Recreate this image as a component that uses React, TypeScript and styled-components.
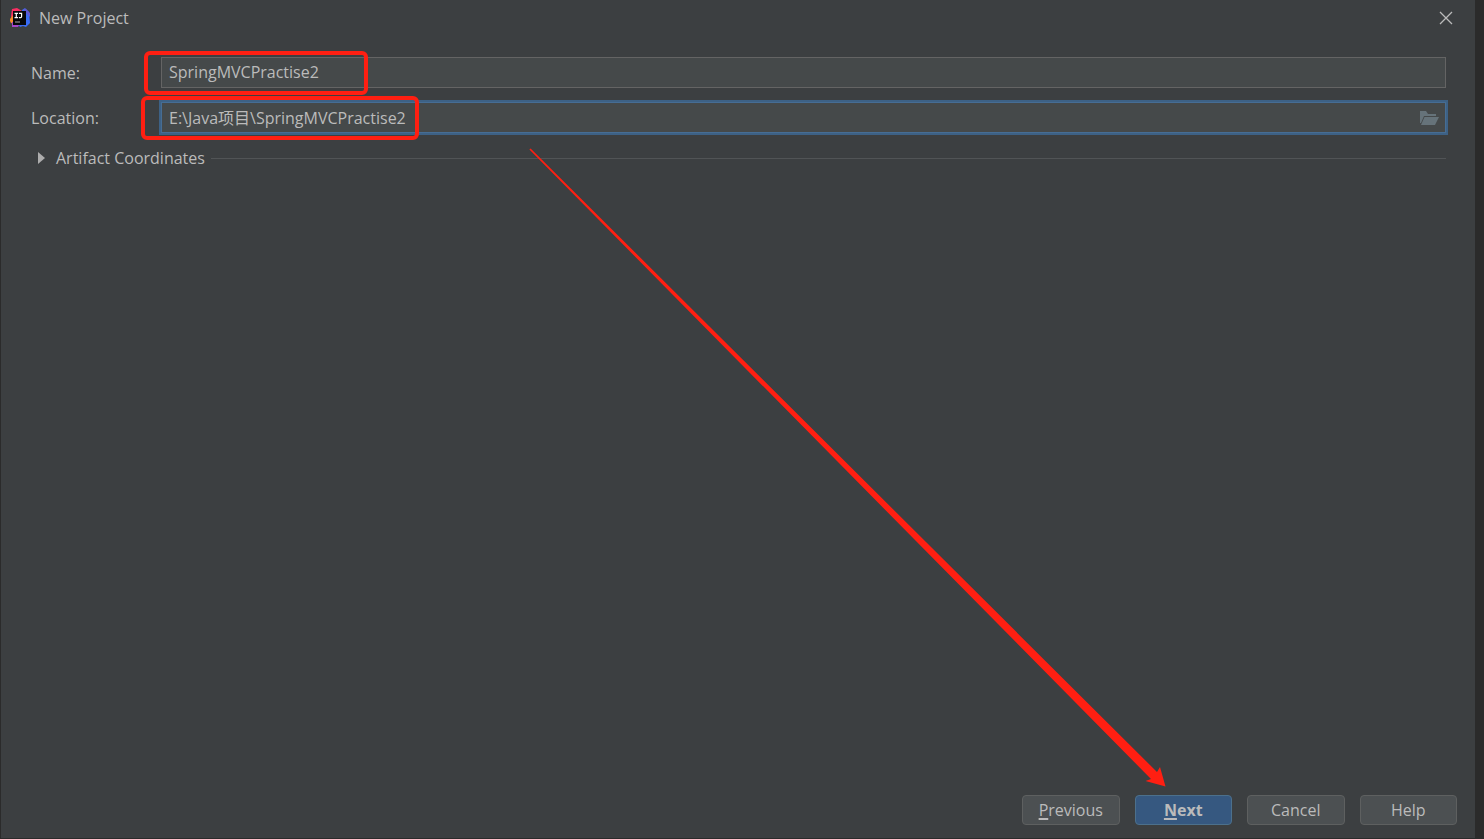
import React, { useState } from "react";
import styled, { createGlobalStyle } from "styled-components";

const GlobalStyle = createGlobalStyle`
  * { box-sizing: border-box; }
  body {
    margin: 0;
    background: #2b2b2b;
    color: #bbbbbb;
    font: 16px/22px "Open Sans", "Noto Sans CJK SC", sans-serif;
  }
  input, button { font: inherit; color: inherit; }
`;

const Screen = styled.div`
  position: relative;
  display: flex;
  min-height: 100vh;
  padding: 0 9px 1px 1px;
  overflow: hidden;
`;

const Dialog = styled.main`
  flex: 1;
  display: flex;
  flex-direction: column;
  background: #3c3f41;
`;

const TitleBar = styled.header`
  display: flex;
  align-items: center;
  gap: 8px;
  height: 36px;
  padding: 0 22px 0 8px;
`;

const Title = styled.h1`
  flex: 1;
  margin: 0;
  font-size: 16px;
  font-weight: 400;
`;

const CloseButton = styled.button`
  display: flex;
  padding: 0;
  border: 0;
  background: none;
`;

const Form = styled.form`
  flex: 1;
  display: flex;
  flex-direction: column;
  padding: 21px 29px 0 30px;
`;

const Row = styled.div`
  display: flex;
  align-items: center;
  margin-bottom: 14px;
`;

const Label = styled.label`
  width: 130px;
`;

const Field = styled.div`
  position: relative;
  flex: 1;
  display: flex;
`;

const TextInput = styled.input<{ $active?: boolean }>`
  flex: 1;
  min-width: 0;
  height: 31px;
  padding: 0 36px 2px 7px;
  outline: none;
  border: 1px solid ${(p) => (p.$active ? "#466d94" : "#646464")};
  background: #45494a;
  box-shadow: ${(p) => (p.$active ? "0 0 0 2px #3d6185" : "none")};
`;

const BrowseButton = styled.button`
  position: absolute;
  right: 7px;
  top: 8px;
  display: flex;
  padding: 0;
  border: 0;
  background: none;
`;

const Highlight = styled.span<{ $left: number; $width: number }>`
  position: absolute;
  top: -6px;
  left: ${(p) => p.$left}px;
  width: ${(p) => p.$width}px;
  height: 44px;
  border: 4px solid #ff1f12;
  border-radius: 6px;
  pointer-events: none;
`;

const Section = styled.button`
  display: flex;
  align-items: center;
  padding: 0 0 0 7px;
  border: 0;
  background: none;
  text-align: left;
`;

const SectionTitle = styled.span`
  margin: 0 6px 0 11px;
`;

const Rule = styled.span`
  flex: 1;
  height: 1px;
  background: #515456;
`;

const Footer = styled.footer`
  display: flex;
  justify-content: flex-end;
  padding: 0 18px 13px;
`;

const Actions = styled.div`
  display: grid;
  grid-template-columns: repeat(4, 1fr);
  gap: 15px;
  width: 435px;
`;

const ActionButton = styled.button<{ $primary?: boolean }>`
  height: 30px;
  padding: 0;
  font-weight: ${(p) => (p.$primary ? 700 : 400)};
  border: 1px solid ${(p) => (p.$primary ? "#4c708c" : "#5e6060")};
  border-radius: 4px;
  background: ${(p) => (p.$primary ? "#365880" : "#4c5052")};
`;

const Mnemonic = styled.span`
  text-decoration: underline;
  text-decoration-thickness: 2px;
  text-underline-offset: 2px;
`;

const ArrowLayer = styled.svg`
  position: absolute;
  left: 0;
  top: 0;
  pointer-events: none;
`;

const IdeaLogo = () => (
  <svg width="22" height="20" viewBox="0 0 22 20" aria-hidden="true">
    <path d="M3 1 8 0l5 3-2 12-8-2-1-5z" fill="#fc2e63" />
    <path d="M1 11l3-4 1 9-3-1-1-2z" fill="#f98b29" />
    <path d="M3 14h9l-3 5H3z" fill="#a545c8" />
    <path d="M13 2l3-2 4 4 1 11-4 4-3-1-3 1-2-3z" fill="#3a6cf2" />
    <path d="M14 1l3 0 4 4 0 4-4-4z" fill="#6257ce" />
    <rect x="4" y="3" width="13" height="14" fill="#08080a" />
    <path d="M5.5 5.4h3.6M7.3 5v5M5.5 9.7h3.6M10 5.4h2.6v3.2q0 1.1-1 1.1H10" fill="none" stroke="#fff" strokeWidth="1.2" />
    <path d="M6 14h5" stroke="#aaa" strokeWidth="1" />
  </svg>
);

const CloseIcon = () => (
  <svg width="14" height="14" viewBox="0 0 14 14" fill="none" stroke="#bbbbbb" strokeWidth="1.3">
    <path d="M1 1l12 12M13 1L1 13" />
  </svg>
);

const FolderIcon = () => (
  <svg width="19" height="16" viewBox="0 0 19 16" fill="#66737a">
    <path d="M0 13V1h6l2 3h8v2H4L1 13z" />
    <path d="M4.5 7H19l-4 8H1z" />
  </svg>
);

const Chevron = () => (
  <svg width="7" height="12" viewBox="0 0 7 12" fill="#adadad">
    <path d="M0 0l7 6-7 6z" />
  </svg>
);

export default function App() {
  const [name, setName] = useState("SpringMVCPractise2");
  const [location, setLocation] = useState("E:\\Java项目\\SpringMVCPractise2");

  return (
    <Screen>
      <GlobalStyle />
      <Dialog>
        <TitleBar>
          <IdeaLogo />
          <Title>New Project</Title>
          <CloseButton type="button" aria-label="Close">
            <CloseIcon />
          </CloseButton>
        </TitleBar>
        <Form>
          <Row>
            <Label htmlFor="name">Name:</Label>
            <Field>
              <TextInput id="name" value={name} onChange={(e) => setName(e.target.value)} />
              <Highlight $left={-17} $width={224} />
            </Field>
          </Row>
          <Row>
            <Label htmlFor="location">Location:</Label>
            <Field>
              <TextInput
                $active
                id="location"
                value={location}
                onChange={(e) => setLocation(e.target.value)}
              />
              <BrowseButton type="button" aria-label="Browse">
                <FolderIcon />
              </BrowseButton>
              <Highlight $left={-20} $width={278} />
            </Field>
          </Row>
          <Section type="button" aria-expanded="false">
            <Chevron />
            <SectionTitle>Artifact Coordinates</SectionTitle>
            <Rule />
          </Section>
        </Form>
        <Footer>
          <Actions>
            <ActionButton type="button">
              <Mnemonic>P</Mnemonic>revious
            </ActionButton>
            <ActionButton type="button" $primary>
              <Mnemonic>N</Mnemonic>ext
            </ActionButton>
            <ActionButton type="button">Cancel</ActionButton>
            <ActionButton type="button">Help</ActionButton>
          </Actions>
        </Footer>
      </Dialog>
      <ArrowLayer width="1170" height="790" viewBox="0 0 1170 790" fill="#ff1f12" aria-hidden="true">
        <path d="M529.4 149.6L530.6 148.4L1157 772L1160 767L1165.5 786.5L1145.5 781L1151 779Z" />
      </ArrowLayer>
    </Screen>
  );
}
